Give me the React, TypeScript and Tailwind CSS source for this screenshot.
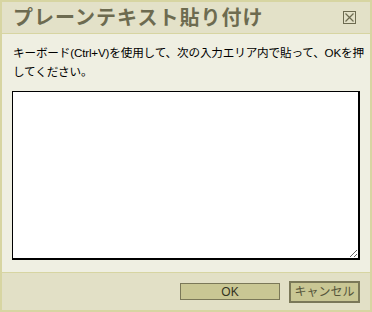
export default function App() {
  return (
    <div
      className="w-[372px] h-[312px] flex flex-col border-2 border-[#d7d5a2] bg-[#efefe2] text-black"
      style={{ fontFamily: '"Liberation Sans", "Noto Sans CJK JP", sans-serif' }}
    >
      <header className="h-[32px] flex items-center justify-between pl-[11px] pr-[14px] bg-[#e3e1c8] border-b border-[#d7d5a2]">
        <h1 className="text-[20px] font-bold text-[#6d6b50] leading-none tracking-[1px]">
          プレーンテキスト貼り付け
        </h1>
        <button className="w-[13px] h-[13px] border border-[#6d6b50] flex items-center justify-center">
          <svg width="11" height="11" viewBox="0 0 11 11">
            <path d="M1.5 1.5 L9.5 9.5 M9.5 1.5 L1.5 9.5" stroke="#6d6b50" strokeWidth="1.2" />
          </svg>
        </button>
      </header>

      <main className="flex-1 flex flex-col px-[10px] pt-[9px] pb-[12px]">
        <p className="text-[11.6px] leading-[19px] pl-[1px] mr-[-8px] tracking-[-0.15px]">
          キーボード(Ctrl+V)を使用して、次の入力エリア内で貼って、OKを押してください。
        </p>
        <textarea className="mt-[10px] flex-1 bg-white border border-black border-r-2 border-b-2 outline-none resize-y" />
      </main>

      <footer className="h-[38px] flex items-center justify-end gap-[9px] pr-[10px] bg-[#e2e0c6] border-t border-[#d7d5a2]">
        <button className="w-[100px] h-[17px] bg-[#c9c794] border border-[#7a7858] text-[12px] leading-none text-[#33331f]">
          OK
        </button>
        <button className="w-[71px] h-[22px] bg-[#c9c794] border-2 border-[#7a7858] text-[12px] leading-none text-[#55553a]">
          キャンセル
        </button>
      </footer>
    </div>
  );
}
